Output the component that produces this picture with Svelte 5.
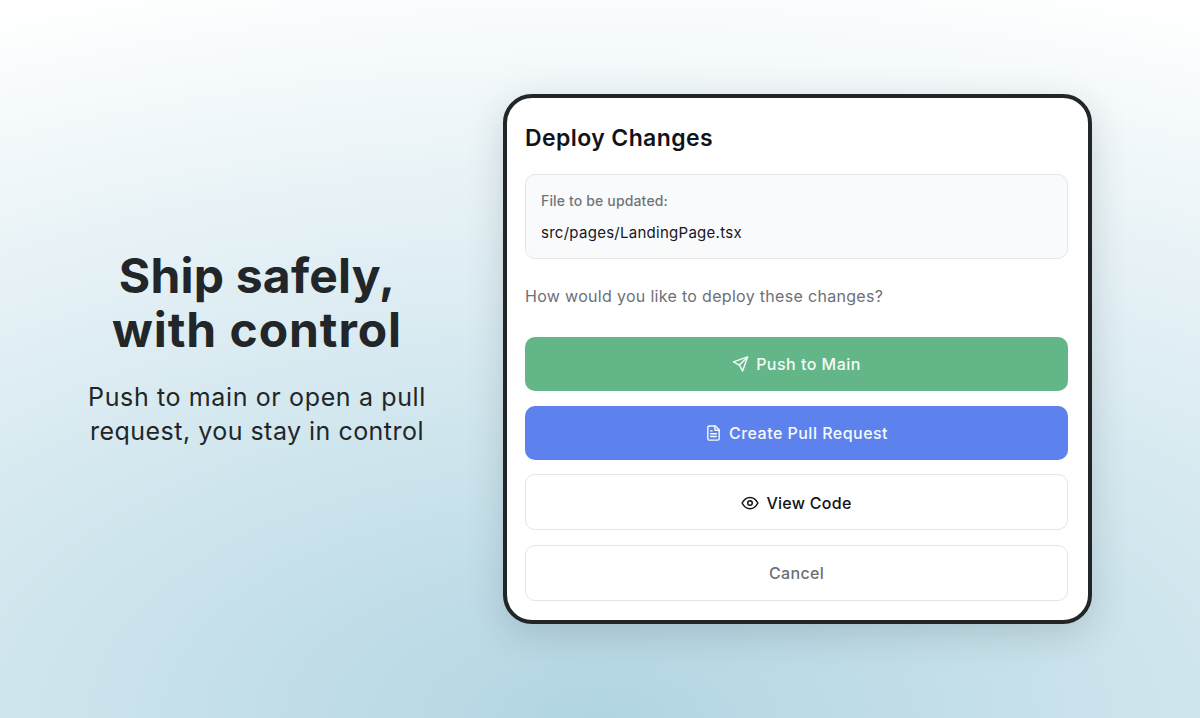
<script lang="ts">
	let file = $state('src/pages/LandingPage.tsx');
</script>

<main>
	<section class="intro">
		<h1><span class="first">Ship safely,</span><br />with control</h1>
		<p><span class="lead">Push to main or open a pull</span><br />request, you stay in control</p>
	</section>

	<section class="card">
		<h2>Deploy Changes</h2>

		<div class="file">
			<span class="label">File to be updated:</span>
			<span class="path">{file}</span>
		</div>

		<p class="question">How would you like to deploy these changes?</p>

		<div class="actions">
			<button class="push">
				<svg width="17" height="18" viewBox="0 0 24 24">
					<path d="M22 2 15 22 10.500 13.500 2 9Z" />
					<path d="M22 2 10.500 13.500" />
				</svg>
				<span>Push to Main</span>
			</button>
			<button class="pull">
				<svg width="17" height="18" viewBox="0 0 24 24">
					<path d="M14.5 2H6a2 2 0 0 0-2 2v16a2 2 0 0 0 2 2h12a2 2 0 0 0 2-2V7.5Z" />
					<path d="M14 2v6h6M8 9h2M8 13h8M8 17h8" />
				</svg>
				<span>Create Pull Request</span>
			</button>
			<button class="view">
				<svg width="18" height="18" viewBox="0 0 24 24">
					<path d="M1.5 12C4 7 7.500 4.500 12 4.500S20 7 22.500 12C20 17 16.500 19.500 12 19.500S4 17 1.500 12Z" />
					<circle cx="12" cy="12" r="3" />
				</svg>
				<span>View Code</span>
			</button>
			<button class="cancel"><span>Cancel</span></button>
		</div>
	</section>
</main>

<style>
	:global(body) {
		overflow: hidden;
	}
	main {
		box-sizing: border-box;
		height: 718px;
		display: grid;
		grid-template-columns: 514px 589px;
		padding-top: 94px;
		margin: 0;
		font-family: Inter, 'Liberation Sans', sans-serif;
		color: #222628;
		background: radial-gradient(ellipse 1540px 770px at 50% 100%, #b1d5e2, #ffffff);
	}
	.intro {
		text-align: center;
		padding-top: 155px;
	}
	h1 {
		margin: 0;
		font-size: 48px;
		font-weight: 700;
		line-height: 54px;
		letter-spacing: 0.95px;
	}
	.first {
		letter-spacing: 0.2px;
	}
	.intro p {
		margin: 23px 0 0;
		font-size: 25px;
		line-height: 34px;
		letter-spacing: 0.48px;
	}
	.lead {
		letter-spacing: 0.63px;
	}
	.card {
		box-sizing: border-box;
		width: 589px;
		height: 530px;
		margin-left: -11px;
		padding: 22px 20px 19px 18px;
		border: 4px solid #222628;
		border-radius: 29px;
		background: #fff;
		box-shadow: 0 10px 36px rgba(34, 50, 56, 0.17);
	}
	h2 {
		margin: 0 0 18px;
		font-size: 23px;
		font-weight: 600;
		line-height: 36px;
		letter-spacing: 0.4px;
		color: #111318;
	}
	.file {
		box-sizing: border-box;
		height: 85px;
		display: flex;
		flex-direction: column;
		padding: 10px 15px;
		border: 1px solid #e4e6e9;
		border-radius: 10px;
		background: #f9fafc;
		line-height: 32px;
	}
	.label {
		font-size: 14px;
		font-weight: 500;
		letter-spacing: 0.15px;
		color: #717479;
	}
	.path {
		font-size: 15px;
		letter-spacing: 0.27px;
		color: #15171c;
	}
	.question {
		margin: 22px 0 26px;
		font-size: 16px;
		line-height: 30px;
		letter-spacing: 0.31px;
		color: #6c7077;
	}
	.actions {
		display: flex;
		flex-direction: column;
		gap: 14.6px;
	}
	button {
		box-sizing: border-box;
		height: 56px;
		display: flex;
		align-items: center;
		justify-content: center;
		gap: 7px;
		padding: 0;
		border: 1px solid #e4e5e8;
		border-radius: 10px;
		background: #fff;
		font-family: inherit;
		font-size: 16px;
		font-weight: 500;
		letter-spacing: 0.35px;
		color: #111318;
	}
	.push,
	.pull {
		height: 54px;
		border: none;
		letter-spacing: 0.48px;
		color: #f4fbfa;
		background: #63b687;
	}
	.pull {
		background: #5d82ee;
	}
	.view {
		padding-top: 1px;
		letter-spacing: 0.28px;
	}
	.cancel {
		color: #6c7077;
	}
	svg {
		fill: none;
		stroke: currentColor;
		stroke-width: 2;
		stroke-linecap: round;
		stroke-linejoin: round;
	}
</style>
